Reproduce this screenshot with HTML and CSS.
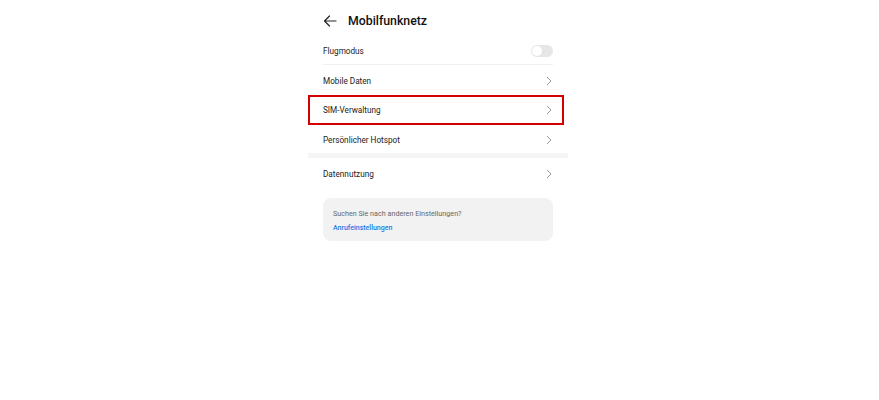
FILE: index.html
```html
<!DOCTYPE html>
<html lang="de">
<head>
<meta charset="utf-8">
<title>Mobilfunknetz</title>
<link rel="stylesheet" href="styles.css">
</head>
<body>
<div class="screen">
  <header class="header">
    <svg class="back" width="14" height="12" viewBox="0 0 14 12"><path d="M13 6H1.5M6.5 1L1.5 6l5 5" fill="none" stroke="#222" stroke-width="1.2" stroke-linecap="round" stroke-linejoin="round"/></svg>
    <h1 class="title">Mobilfunknetz</h1>
  </header>
  <div class="group">
    <div class="row sep">
      <span class="label">Flugmodus</span>
      <span class="toggle"><span class="knob"></span></span>
    </div>
    <div class="row">
      <span class="label">Mobile Daten</span>
      <svg class="chev" width="6" height="10" viewBox="0 0 6 10"><path d="M1 1l4 4-4 4" fill="none" stroke="#999" stroke-width="1"/></svg>
    </div>
    <div class="row highlight">
      <span class="label">SIM-Verwaltung</span>
      <svg class="chev" width="6" height="10" viewBox="0 0 6 10"><path d="M1 1l4 4-4 4" fill="none" stroke="#999" stroke-width="1"/></svg>
    </div>
    <div class="row">
      <span class="label">Persönlicher Hotspot</span>
      <svg class="chev" width="6" height="10" viewBox="0 0 6 10"><path d="M1 1l4 4-4 4" fill="none" stroke="#999" stroke-width="1"/></svg>
    </div>
  </div>
  <div class="band"></div>
  <div class="group">
    <div class="row tall">
      <span class="label">Datennutzung</span>
      <svg class="chev" width="6" height="10" viewBox="0 0 6 10"><path d="M1 1l4 4-4 4" fill="none" stroke="#999" stroke-width="1"/></svg>
    </div>
  </div>
  <div class="card">
    <p class="card-q">Suchen Sie nach anderen Einstellungen?</p>
    <a class="card-link" href="#">Anrufeinstellungen</a>
  </div>
</div>
</body>
</html>
```
FILE: styles.css
```css
html, body {
  margin: 0;
  padding: 0;
  background: #fff;
}
body {
  font-family: Roboto, "Noto Sans", sans-serif;
  color: #222;
}
.screen {
  width: 260px;
  margin-left: 308px;
}
.header {
  height: 31px;
  padding-top: 5px;
  display: flex;
  align-items: center;
  padding-left: 15px;
  gap: 11px;
}
.back {
  display: block;
}
.title {
  margin: 0;
  font-size: 12.3px;
  font-weight: 500;
  color: #111;
}
.group {
  padding: 0 15px;
}
.row {
  height: 29.3px;
  padding-top: 2px;
  display: flex;
  align-items: center;
  justify-content: space-between;
  position: relative;
  box-sizing: border-box;
}
.row.tall {
  height: 30px;
}
.row.sep {
  border-bottom: 1px solid #f0f0f0;
}
.label {
  font-size: 8.2px;
  color: #222;
}
.chev {
  display: block;
  margin-right: 1px;
}
.toggle {
  width: 22px;
  height: 12px;
  border-radius: 6px;
  background: #e6e6e6;
  position: relative;
}
.knob {
  position: absolute;
  left: 1px;
  top: 1px;
  width: 10px;
  height: 10px;
  border-radius: 50%;
  background: #fff;
}
.highlight::after {
  content: "";
  position: absolute;
  left: -15px;
  right: -11px;
  top: 0;
  bottom: -1px;
  border: 2px solid #d40000;
}
.band {
  height: 5px;
  background: #f5f5f5;
}
.card {
  margin: 10px 15px 0;
  background: #f2f2f2;
  border-radius: 8px;
  padding: 11px 10px 8px;
}
.card-q {
  margin: 0 0 4px;
  font-size: 7.2px;
  line-height: 10px;
  color: #666;
}
.card-link {
  display: block;
  font-size: 7px;
  line-height: 10px;
  font-weight: 500;
  color: #1a7ae6;
  text-decoration: none;
}
```
